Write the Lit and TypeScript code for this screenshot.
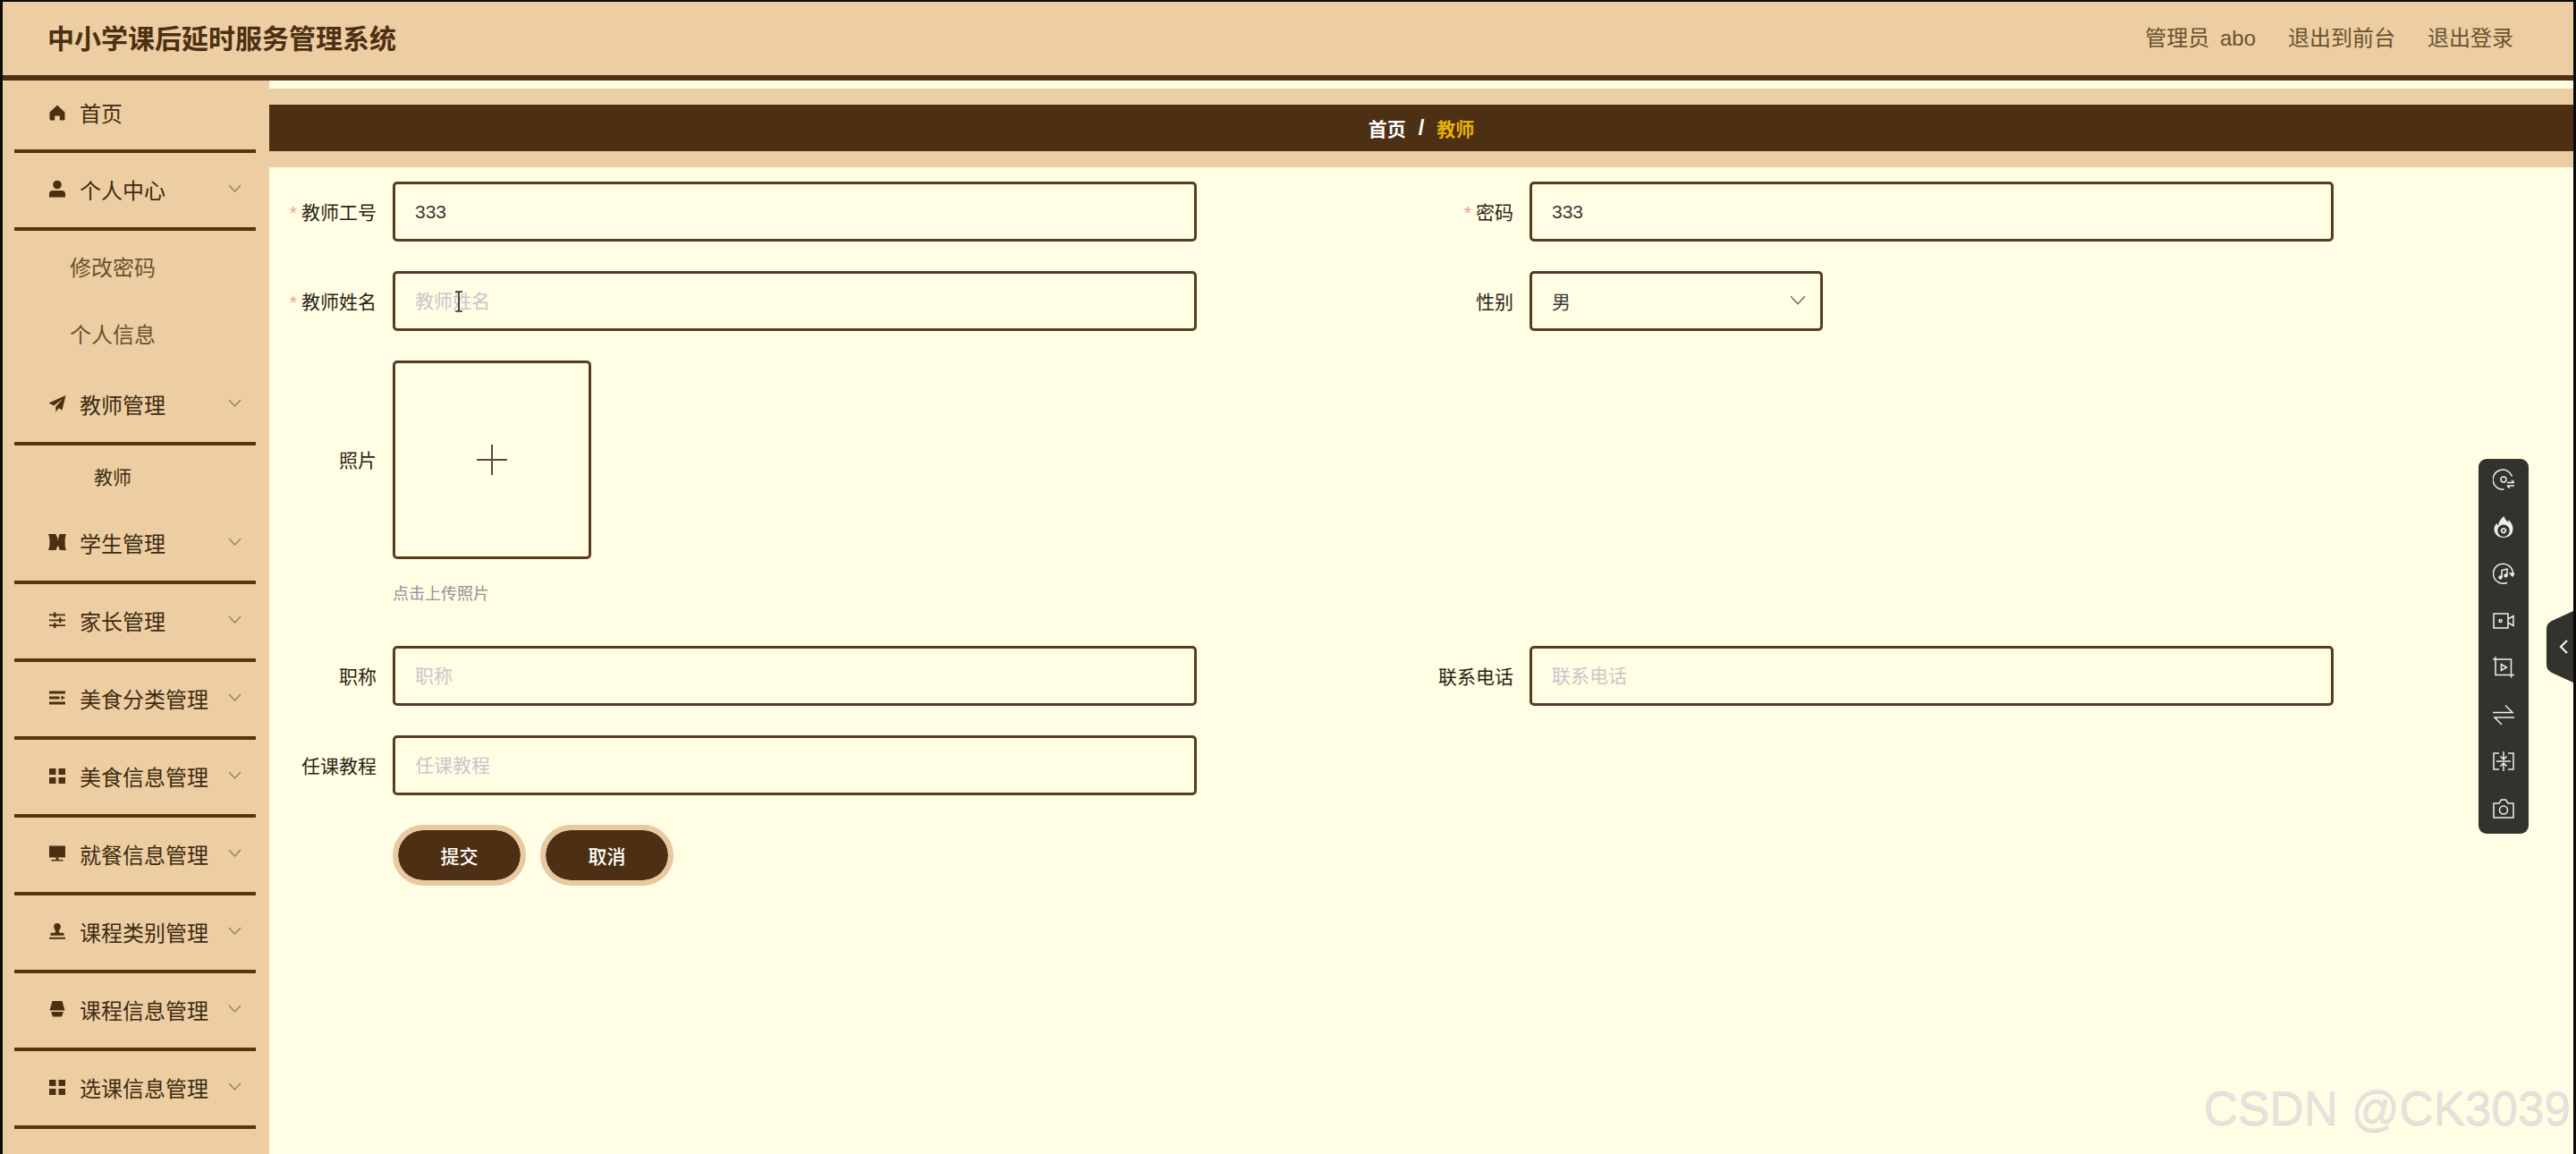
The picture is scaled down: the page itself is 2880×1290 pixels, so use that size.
import { LitElement, html, css, svg } from "lit";
import { customElement } from "lit/decorators.js";

const grid = svg`<path d="M1 2h7.500v7H1zM11.500 2H19v7h-7.500zM1 12h7.500v7H1zM11.500 12H19v7h-7.500z"/>`;
const sideIcons: Record<string, unknown> = {
  home: svg`<path d="M10 1.500 18.500 9.500 18.500 17a1.500 1.500 0 0 1-1.500 1.500H12.800V13.500H7.200V18.500H3A1.500 1.500 0 0 1 1.500 17V9.500Z"/>`,
  user: svg`<circle cx="10" cy="5.500" r="4.800"/><path d="M1 16a4 4 0 0 1 4-4h10a4 4 0 0 1 4 4v3.500H1z"/>`,
  plane: svg`<path d="M19.500 1 .5 9.500 6 12.500 16 5 8.200 13.800 8.500 19.500 11.700 15.200 15.500 17.500Z"/>`,
  ticket: svg`<path d="M0 1h8.500c.6 2.200 1 3.500 2.500 4.500-1 1-1 1.500 0 2.500l1-5.500L12.700 1H20c-1.300 3-1.300 5.500-1.300 9s0 6 1.300 9H12.700c-.5-2.500-1-3.500-1.700-5l-1.200 1.500c-.3 1.300-.8 2.300-1.300 3.500H0c1.300-3 1.500-5.500 1.500-9S1.300 4 0 1z"/>`,
  sliders: svg`<path d="M1 3.500h18v1.800H1zM1 9.400h18v1.800H1zM1 15.200h18V17H1z"/><path d="M6 1.500h2.500v5.800H6zM12 7.400h2.500v5.800H12zM6 13.200h2.500V19H6z"/>`,
  fold: svg`<path d="M1 2.500h18v3H1zM1 8.500h11.500v3H1zM1 14.500h18v3H1z"/><path d="M14.500 7.500 19 10l-4.500 2.500z"/>`,
  grid,
  monitor: svg`<path d="M1 1.500h18v13H1z"/><path d="M8.500 14.500h3v2.500h5v1.500H3.500V17h5z"/>`,
  stamp: svg`<path d="M10 1a3.800 3.800 0 0 1 3.800 3.800c0 2.500-1.800 3.600-1.800 5.700 0 .8.300 1 1 1.300h4.500v3H2.500v-3H7c.7-.3 1-.5 1-1.300 0-2.100-1.800-3.200-1.800-5.700A3.800 3.800 0 0 1 10 1zM1 16.800h18v2H1z"/>`,
  lamp: svg`<path d="M4.500 1h11L18.500 11.500h-17zM3.500 13h13v1.500l-1.500 4H5l-1.500-4z"/>`,
};

const toolIcons = [
  svg`<path d="M21.500 8.500A11 11 0 1 0 12.500 23"/><circle cx="12" cy="12" r="3"/><path d="M16 15.500h8M21 12.800l3 2.700M24 19h-8M19 21.800 16 19"/>`,
  svg`<path fill="#eeeeea" stroke="none" fill-rule="evenodd" d="M12.500 0c.8 3.500 2.800 4.700 4.500 6.700.4-.9.500-1.700.5-2.700 3 2.700 5 6.300 5 10.200C22.500 20 18 24 12 24S1.500 20 1.500 14.500c0-2.800 1.200-4.800 3-6.800.2 1.300.7 2.300 1.500 3 .5-4.300 3-8 6.500-10.700zM12 9.500a6.700 6.700 0 1 0 .01 0zM12 13a3.200 3.200 0 1 1-.01 0zM12 14.800a1.400 1.400 0 1 0 .01 0z"/>`,
  svg`<path d="M22.500 12A11 11 0 1 0 16 22.300"/><path d="M22 15l2-3h-4.500z" fill="#eeeeea"/><path d="M10 16.500V8.500l6-1.500v7.500"/><circle cx="8.500" cy="16.500" r="1.400" fill="#eeeeea"/><circle cx="14.500" cy="14.500" r="1.400" fill="#eeeeea"/>`,
  svg`<path d="M1 4h16v16H1zM17 10l6-3.500v11L17 14"/><circle cx="8.500" cy="12" r="1.500"/>`,
  svg`<path d="M3 0v3M3 3h17.500v17.500M3 3v17.500h17.500M20.500 20.500v3M0 3h3M20.500 20.500H24"/><path d="M9.500 8.500v7l6-3.500z"/>`,
  svg`<path d="M0 9.500h22L14 1.500M24 15H2l8 8"/>`,
  svg`<path d="M7 3H1v18h6M17 3h6v18h-6M4 12h16M12 1v8.500M8.500 6.500 12 10l3.500-3.500M12 23v-8.500M8.500 17.500 12 14l3.500 3.500"/>`,
  svg`<path d="M1 6h6l2.500-4h5L17 6h6v16H1z"/><circle cx="12" cy="13.500" r="4.500"/>`,
];

interface Item { icon: string; label: string; arrow?: boolean; first?: boolean; subs?: string[]; deep?: boolean }
const menu: Item[] = [
  { icon: "home", label: "首页", first: true },
  { icon: "user", label: "个人中心", arrow: true, subs: ["修改密码", "个人信息"] },
  { icon: "plane", label: "教师管理", arrow: true, subs: ["教师"], deep: true },
  { icon: "ticket", label: "学生管理", arrow: true },
  { icon: "sliders", label: "家长管理", arrow: true },
  { icon: "fold", label: "美食分类管理", arrow: true },
  { icon: "grid", label: "美食信息管理", arrow: true },
  { icon: "monitor", label: "就餐信息管理", arrow: true },
  { icon: "stamp", label: "课程类别管理", arrow: true },
  { icon: "lamp", label: "课程信息管理", arrow: true },
  { icon: "grid", label: "选课信息管理", arrow: true },
];

const chevron = html`<svg class="chev" viewBox="0 0 15 9"><path d="M1 1l6.500 7L14 1"/></svg>`;

@customElement("app-root")
export class AppRoot extends LitElement {
  static styles = css`
    :host {
      display: block;
      width: 2880px;
      height: 1290px;
      box-sizing: border-box;
      padding: 2px 3px 0;
      background: #0a0a0a;
      font-family: "Liberation Sans", "Noto Sans CJK SC", sans-serif;
      overflow: hidden;
    }
    .frame {
      position: relative;
      height: 1288px;
      display: flex;
      flex-direction: column;
      overflow: hidden;
      background: #fffde3;
    }
    .top {
      flex: none;
      height: 82px;
      box-sizing: content-box;
      border-bottom: 6px solid #4d3013;
      background: #eccea2;
      display: flex;
      align-items: center;
      justify-content: space-between;
      padding: 0 67px 0 50px;
    }
    .title { font-size: 30px; font-weight: 700; color: #4d3013; margin-bottom: 4px; }
    .links { display: flex; gap: 36px; font-size: 24px; color: #6a5230; margin-bottom: 5px; }
    .links .user { word-spacing: 5px; }
    .body { flex: 1; display: flex; min-height: 0; }
    .side { flex: none; width: 298px; background: #eccea2; overflow: hidden; }
    .item {
      box-sizing: border-box;
      height: 87px;
      margin: 0 15px 0 13px;
      padding: 0 0 3px 38px;
      border-bottom: 4px solid #573510;
      display: flex;
      align-items: center;
      font-size: 24px;
      color: #3f2c12;
    }
    .item.first { height: 81px; padding-bottom: 6px; }
    .ic { width: 20px; height: 20px; flex: none; fill: #4d3013; margin-right: 15px; }
    .item span { flex: 1; }
    .chev { width: 15px; height: 9px; flex: none; fill: none; stroke: #93805c; stroke-width: 1.300; margin: 0 16px 2px 0; }
    .subs { padding-top: 3px; }
    .sub { box-sizing: border-box; height: 75px; padding: 0 0 3px 75px; display: flex; align-items: center; font-size: 24px; color: #6a5230; }
    .sub.deep { height: 68px; margin-top: -3px; padding: 0 0 0 102px; font-size: 21px; color: #3f2c12; }
    .main { flex: 1; min-width: 0; display: flex; flex-direction: column; }
    .strip { flex: none; height: 9px; background: #fffde3; }
    .crumbwrap { flex: none; padding: 18px 0; background: #eccea2; }
    .crumb {
      height: 52px;
      background: #4d3013;
      display: flex;
      align-items: center;
      justify-content: center;
      gap: 14px;
      font-size: 21px;
      font-weight: 700;
      color: #fff;
    }
    .crumb i { font-style: normal; font-size: 24px; }
    .crumb b { color: #e9ae08; font-weight: 700; }
    .form { flex: 1; padding-top: 16px; }
    .row { display: grid; grid-template-columns: 1271px 1fr; margin-bottom: 33px; }
    .field { display: flex; align-items: center; }
    .label {
      flex: none;
      width: 120px;
      margin-right: 18px;
      padding-bottom: 2px;
      text-align: right;
      font-size: 21px;
      color: #2b2415;
    }
    .star { color: #f59a9a; margin-right: 5px; }
    input, .select {
      box-sizing: border-box;
      height: 67px;
      width: 899px;
      border: 3px solid #573d20;
      border-radius: 5px;
      background: transparent;
      padding: 0 22px;
      font: inherit;
      font-size: 21px;
      color: #3a3a3a;
      outline: none;
    }
    input::placeholder { color: #c6c8cc; opacity: 1; }
    .select { width: 328px; display: flex; align-items: center; justify-content: space-between; padding: 0 16px 2px 22px; }
    .select .chev { margin: 0; width: 18px; height: 11px; stroke: #6f6a5c; stroke-width: 1.200; }
    .upload { margin-bottom: 0; }
    .box {
      box-sizing: border-box;
      width: 222px;
      height: 222px;
      border: 3px solid #573d20;
      border-radius: 5px;
      display: flex;
      align-items: center;
      justify-content: center;
    }
    .box svg { width: 34px; height: 34px; stroke: #5a4a30; stroke-width: 2; fill: none; }
    .hint { margin-left: 138px; padding: 27px 0 46px; font-size: 18px; line-height: 24px; color: #8f9499; }
    .btns { display: flex; gap: 16px; margin-left: 138px; }
    button {
      box-sizing: border-box;
      width: 149px;
      height: 68px;
      border: 6px solid #e8c9a0;
      border-radius: 34px;
      background: #4d3013;
      background-clip: padding-box;
      color: #fff;
      font: inherit;
      font-size: 21px;
      font-weight: 500;
      padding: 0;
    }
    .cursor { position: absolute; left: 502px; top: 323px; width: 16px; height: 24px; fill: none; stroke: #222; stroke-width: 1.600; }
    .tools {
      position: absolute;
      left: 2768px;
      top: 511px;
      box-sizing: border-box;
      width: 56px;
      height: 419px;
      padding: 11px 0 16px;
      border-radius: 9px;
      background: #32332e;
      display: flex;
      flex-direction: column;
      align-items: center;
      justify-content: space-between;
    }
    .tools svg { width: 24px; height: 24px; fill: none; stroke: #eeeeea; stroke-width: 1.500; }
    .tab { position: absolute; left: 2844px; top: 681px; width: 30px; height: 80px; }
    .mark {
      position: absolute;
      right: 3px;
      top: 1206px;
      font-size: 53px;
      line-height: 62px;
      white-space: nowrap;
      color: #e4e4de;
      text-shadow: 0 1px 1px #cfcfc8;
    }
  `;

  private field(label: string, star: boolean, inner: unknown) {
    return html`<div class="field">
      <div class="label">${star ? html`<span class="star">*</span>` : ""}${label}</div>
      ${inner}
    </div>`;
  }

  private renderItem(m: Item) {
    return html`
      <div class="item ${m.first ? "first" : ""}">
        <svg class="ic" viewBox="0 0 20 20">${sideIcons[m.icon]}</svg>
        <span>${m.label}</span>
        ${m.arrow ? chevron : ""}
      </div>
      ${m.subs
        ? html`<div class="subs">
            ${m.subs.map((s) => html`<div class="sub ${m.deep ? "deep" : ""}">${s}</div>`)}
          </div>`
        : ""}
    `;
  }

  render() {
    return html`<div class="frame">
      <header class="top">
        <div class="title">中小学课后延时服务管理系统</div>
        <div class="links"><span class="user">管理员 abo</span><span>退出到前台</span><span>退出登录</span></div>
      </header>
      <div class="body">
        <nav class="side">${menu.map((m) => this.renderItem(m))}</nav>
        <main class="main">
          <div class="strip"></div>
          <div class="crumbwrap">
            <div class="crumb"><span>首页</span><i>/</i><b>教师</b></div>
          </div>
          <section class="form">
            <div class="row">
              ${this.field("教师工号", true, html`<input value="333" />`)}
              ${this.field("密码", true, html`<input value="333" />`)}
            </div>
            <div class="row">
              ${this.field("教师姓名", true, html`<input placeholder="教师姓名" />`)}
              ${this.field("性别", false, html`<div class="select"><span>男</span>${chevron}</div>`)}
            </div>
            <div class="row upload">
              ${this.field(
                "照片",
                false,
                html`<div class="box"><svg viewBox="0 0 34 34"><path d="M17 0v34M0 17h34" /></svg></div>`
              )}
            </div>
            <div class="hint">点击上传照片</div>
            <div class="row">
              ${this.field("职称", false, html`<input placeholder="职称" />`)}
              ${this.field("联系电话", false, html`<input placeholder="联系电话" />`)}
            </div>
            <div class="row">
              ${this.field("任课教程", false, html`<input placeholder="任课教程" />`)}
            </div>
            <div class="btns"><button>提交</button><button>取消</button></div>
          </section>
        </main>
      </div>
      <svg class="cursor" viewBox="0 0 16 24"><path d="M4 1h3l1 1 1-1h3M8 2v20M4 23h3l1-1 1 1h3" /></svg>
      <aside class="tools">${toolIcons.map((i) => html`<svg viewBox="0 0 24 24">${i}</svg>`)}</aside>
      <svg class="tab" viewBox="0 0 30 80">
        <path fill="#32332e" d="M30 0V80L6 69Q0 66 0 60V20Q0 14 6 11Z" />
        <path fill="none" stroke="#f0f0ec" stroke-width="2.200" d="M23 33l-7 7 7 7" />
      </svg>
      <div class="mark">CSDN @CK3039</div>
    </div>`;
  }
}
